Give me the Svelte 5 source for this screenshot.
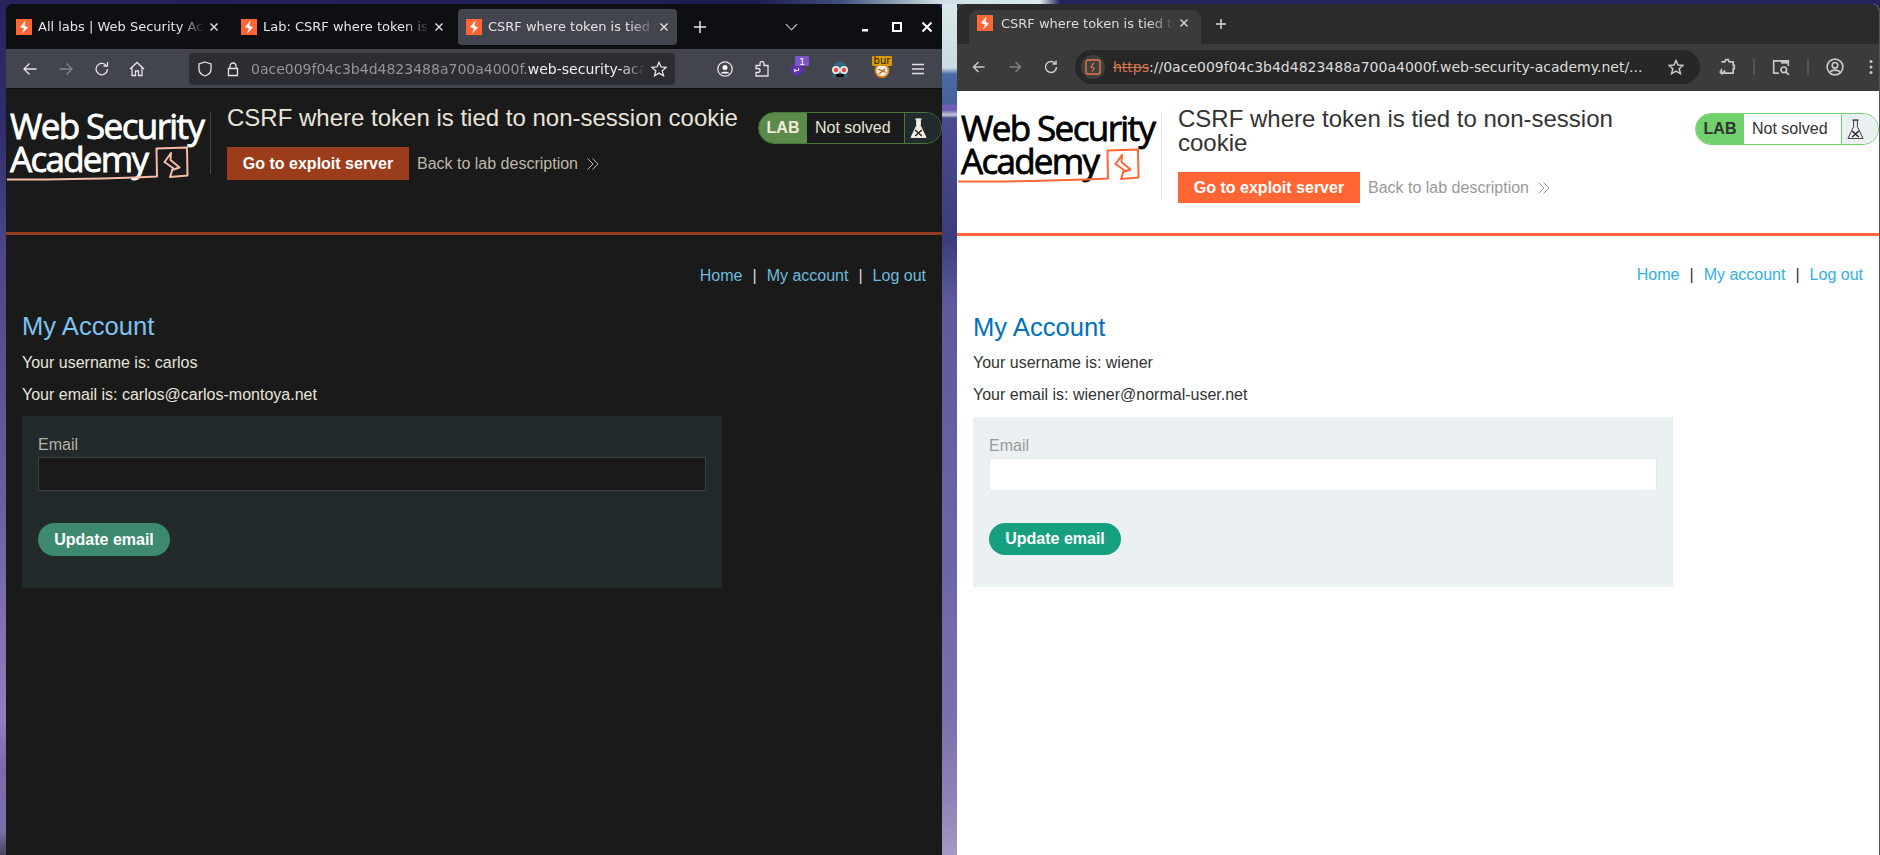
<script>
  const accounts = {
    dark: { user: 'carlos', email: 'carlos@carlos-montoya.net' },
    light: { user: 'wiener', email: 'wiener@normal-user.net' }
  };
</script>

{#snippet favicon()}
  <svg class="fav" viewBox="0 0 16 16"><rect width="16" height="16" fill="#ff6633"/><path d="M9.500 1.500 4 8l4 1.500L6 14.500 12 8.500 8.500 6.800Z" fill="#fff"/></svg>
{/snippet}

{#snippet close()}
  <svg class="x" viewBox="0 0 10 10"><path d="M1.500 1.500l7 7M8.500 1.500l-7 7" stroke="currentColor" stroke-width="1.400" fill="none"/></svg>
{/snippet}

{#snippet flask()}
  <svg class="flask" viewBox="0 0 18 22">
    <path class="flask-body" d="M5.500 1h7M7 1v7L1 20.500h16L11 8V1Z"/>
    <path class="flask-x" d="M5.500 12.500l7 6.500M12.500 12.500l-7 6.500"/>
  </svg>
{/snippet}

{#snippet page(kind)}
  <div class="page">
    <header class="lab-head">
      <svg class="logo" viewBox="0 0 204 72">
        <text class="logo-text" x="3" y="29" textLength="195" lengthAdjust="spacing">Web Security</text>
        <text class="logo-text" x="3" y="62" textLength="139" lengthAdjust="spacing">Academy</text>
        <path class="logo-mark" d="M0.500 69.500C40 70 95 68.500 128 67.500L150 66.500 149.500 38.500 180 37.500 180.500 65.500 163 67M164 43 157.500 52 166 58 163 67M164 43 163.500 50 172.500 57.500 165 60"/>
      </svg>
      <div class="divider"></div>
      <div class="title-col">
        <h2 class="title">CSRF where token is tied to non-session cookie</h2>
        <div class="actions">
          <span class="exploit">Go to exploit server</span>
          <span class="back">Back to lab description</span>
          <svg class="chev" viewBox="0 0 14 14"><path d="M1.500 1.500 7 7l-5.500 5.500M6.500 1.500 12 7l-5.500 5.500" fill="none" stroke="currentColor" stroke-width="1"/></svg>
        </div>
      </div>
      <div class="badge">
        <span class="badge-lab">LAB</span>
        <span class="badge-status">Not solved</span>
        <span class="badge-icon">{@render flask()}</span>
      </div>
    </header>
    <main class="content">
      <nav class="site-nav">
        <span class="link">Home</span><span class="sep">|</span><span class="link">My account</span><span class="sep">|</span><span class="link">Log out</span>
      </nav>
      <h1>My Account</h1>
      <p class="p-first">Your username is: {accounts[kind].user}</p>
      <p class="p-second">Your email is: {accounts[kind].email}</p>
      <form class="panel" onsubmit={(e) => e.preventDefault()}>
        <label class="field-label" for="email-{kind}">Email</label>
        <input id="email-{kind}" class="field" type="email" />
        <button class="update" type="submit">Update email</button>
      </form>
    </main>
  </div>
{/snippet}

<div class="desktop">
  <div class="wall wall-left"></div>
  <div class="wall wall-gap"></div>
  <div class="wall wall-top"></div>

  <section class="window dark">
    <div class="ff-tabs">
      <div class="ff-tab">{@render favicon()}<span class="tab-text">All labs | Web Security Academy</span>{@render close()}</div>
      <div class="ff-tab">{@render favicon()}<span class="tab-text">Lab: CSRF where token is tied</span>{@render close()}</div>
      <div class="ff-tab active">{@render favicon()}<span class="tab-text">CSRF where token is tied to non</span>{@render close()}</div>
      <svg class="plus" viewBox="0 0 14 14"><path d="M7 1v12M1 7h12" stroke="#e6e6e6" stroke-width="1.500"/></svg>
      <svg class="list-all" viewBox="0 0 14 8"><path d="M1 1l6 6 6-6" fill="none" stroke="#d0d0d0" stroke-width="1.200"/></svg>
      <div class="wm">
        <svg viewBox="0 0 12 12"><rect x="1" y="8" width="6" height="2.500" fill="#fff"/></svg>
        <svg viewBox="0 0 12 12"><path d="M2 2h8v8H2Z" fill="none" stroke="#fff" stroke-width="2"/></svg>
        <svg viewBox="0 0 12 12"><path d="M1.500 1.500l9 9M10.500 1.500l-9 9" stroke="#fff" stroke-width="2"/></svg>
      </div>
    </div>
    <div class="ff-bar">
      <svg class="ico" viewBox="0 0 16 16"><path d="M14.500 8H2M7.500 2.500 2 8l5.500 5.500" class="ln"/></svg>
      <svg class="ico dim" viewBox="0 0 16 16"><path d="M1.500 8H14M8.500 2.500 14 8l-5.500 5.500" class="ln"/></svg>
      <svg class="ico" viewBox="0 0 16 16"><path d="M13.500 8a5.700 5.700 0 1 1-1.700-4M13.500 1v4h-4" class="ln"/></svg>
      <svg class="ico" viewBox="0 0 16 16"><path d="M1 8l7-6.500L15 8M3 6.500V14.500h3.500V10h3v4.500H13V6.500" class="ln"/></svg>
      <div class="ff-url">
        <svg class="ico-s" viewBox="0 0 16 16"><path d="M8 1l6 2v5c0 3.500-3 6-6 7-3-1-6-3.500-6-7V3Z" class="ln"/></svg>
        <svg class="ico-s" viewBox="0 0 16 16"><path d="M3.500 7.500h9v7h-9ZM5 7.500V5a3 3 0 0 1 6 0v2.500" class="ln"/></svg>
        <span class="ff-url-text"><span class="url-dim">0ace009f04c3b4d4823488a700a4000f.</span>web-security-academy.net/my-account</span>
        <svg class="ico-s star" viewBox="0 0 16 16"><path d="M8 1.200 10 6l5.200.4-4 3.400 1.300 5L8 12.100 3.500 14.800l1.300-5-4-3.400L6 6Z" class="ln"/></svg>
      </div>
      <div class="ff-ext">
        <svg class="ico" viewBox="0 0 16 16"><circle cx="8" cy="8" r="7.200" class="ln" stroke-width="1.500"/><circle cx="8" cy="6.500" r="2.500" fill="#fff"/><path d="M3.500 12.500c1-2.500 8-2.500 9 0" fill="#fff"/></svg>
        <svg class="ico" viewBox="0 0 16 16"><path d="M6 4.500V2.500a2 2 0 0 1 4 0V4.500h4V15H2v-3.500h2a2 2 0 0 0 0-4H2V4.500Z" class="ln"/></svg>
        <svg class="ext" viewBox="0 0 22 24"><path d="M0 15 8 7l8 8-8 7Z" fill="#5b2fb0"/><path d="M5 15.500h4.500V13M5 15.500l1.500-1.500M5 15.500 6.500 17" fill="none" stroke="#e4dcf5" stroke-width="1.100"/><rect x="6" y="1" width="14" height="10" rx="1.500" fill="#7c55d0"/><text x="13" y="9.500" class="ext-num">1</text></svg>
        <svg class="ext" viewBox="0 0 22 24"><path d="M4 14a7 7.500 0 0 1 14 0v8H4Z" fill="#2e6a7a"/><rect x="7" y="19" width="8" height="3" fill="#111"/><circle cx="7" cy="15" r="4" fill="#e4e4e4"/><circle cx="15" cy="15" r="4" fill="#e4e4e4"/><circle cx="7" cy="15" r="2.200" fill="#e2503a"/><circle cx="15" cy="15" r="2.200" fill="#e2503a"/></svg>
        <svg class="ext" viewBox="0 0 22 24"><circle cx="11" cy="15.500" r="6.500" fill="#f4efe8" stroke="#e8841a" stroke-width="1.800"/><path d="M7 14l8 3.500M8 19l6-5" stroke="#b5651d" stroke-width="1.300"/><rect x="1" y="1" width="20" height="10" rx="1" fill="#d89a00"/><text x="11" y="9.200" class="ext-bur">bur</text></svg>
        <svg class="ico" viewBox="0 0 16 16"><path d="M2 3.500h12M2 8h12M2 12.500h12" class="ln"/></svg>
      </div>
    </div>
    {@render page('dark')}
  </section>

  <section class="window light">
    <div class="cr-tabs">
      <div class="cr-tab">{@render favicon()}<span class="tab-text">CSRF where token is tied to non</span>{@render close()}</div>
      <svg class="plus cr-plus" viewBox="0 0 14 14"><path d="M7 2v10M2 7h10" stroke="#d8d8d8" stroke-width="1.500"/></svg>
    </div>
    <div class="cr-bar">
      <svg class="ico" viewBox="0 0 16 16"><path d="M13.500 8H2.500M7.500 3 2.500 8l5 5" class="ln"/></svg>
      <svg class="ico dim" viewBox="0 0 16 16"><path d="M2.500 8h11M8.500 3l5 5-5 5" class="ln"/></svg>
      <svg class="ico" viewBox="0 0 16 16"><path d="M13.500 8a5.500 5.500 0 1 1-1.600-3.900M13 1.500V5H9.500" class="ln"/></svg>
      <div class="omni">
        <span class="chip"><svg class="chip-ico" viewBox="0 0 16 16"><rect x="1" y="1" width="14" height="14" rx="2" fill="none" stroke="#ee7744" stroke-width="1.400"/><path d="M9 3.500 6 8l3 1-2 3.500" fill="none" stroke="#ee7744" stroke-width="1.200"/></svg></span>
        <span class="omni-text"><s>https</s>://0ace009f04c3b4d4823488a700a4000f.web-security-academy.net/...</span>
        <svg class="ico-s" viewBox="0 0 16 16"><path d="M8 1.500 10 6l5 .4-3.800 3.300 1.200 4.900L8 12l-4.400 2.600 1.200-4.900L1 6.400 6 6Z" class="ln" stroke-width="1.600"/></svg>
      </div>
      <div class="cr-ext">
        <svg class="ico" viewBox="0 0 16 16"><path d="M3 3.500h3l1-2h2l1 2h3.500v3h1v3h-1v4H3v-4M1.500 12l2 2 3-3" class="ln"/></svg>
        <span class="cr-sep"></span>
        <svg class="ico" viewBox="0 0 16 16"><path d="M6 13.500H1.500v-11h13V7" class="ln"/><rect x="8" y="2" width="7" height="3" fill="#c8c8c8"/><circle cx="10.500" cy="10.500" r="2.500" class="ln"/><path d="M12.500 12.500 15 15" class="ln"/></svg>
        <span class="cr-sep"></span>
        <svg class="ico" viewBox="0 0 16 16"><circle cx="8" cy="8" r="7" class="ln"/><circle cx="8" cy="6.500" r="2.500" class="ln"/><path d="M3.500 13c1-3 8-3 9 0" class="ln"/></svg>
        <svg class="dots" viewBox="0 0 4 16"><circle cx="2" cy="2.500" r="1.500" fill="#c8c8c8"/><circle cx="2" cy="8" r="1.500" fill="#c8c8c8"/><circle cx="2" cy="13.500" r="1.500" fill="#c8c8c8"/></svg>
      </div>
    </div>
    {@render page('light')}
  </section>
</div>

<style>
  :global(body) { margin: 0; overflow: hidden; }
  .desktop {
    position: relative; width: 1880px; height: 855px; overflow: hidden;
    background: #27235a;
    font-family: "Liberation Sans", Arial, sans-serif;
  }
  .wall { position: absolute; }
  .wall-left {
    left: 0; top: 0; width: 6px; height: 855px;
    background: linear-gradient(180deg, #27235c 0, #312c6c 120px, #4a4585 240px, #6a5f9e 500px, #937fb9 720px, #7a6aa5 770px, #7d6fa8 830px, #4a4560 855px);
  }
  .wall-gap {
    left: 942px; top: 0; width: 15px; height: 855px;
    background: linear-gradient(180deg, #dbe9ea 0, #c8dde2 68px, #4a6aa5 74px, #46609e 104px, #7a5cc4 106px, #6a5cb0 110px, #c4c8dc 115px, #4a4c90 118px, #3a3d78 240px, #5c5a9c 300px, #6b65a5 550px, #7c70ae 720px, #8f82b8 800px, #a498c4 855px);
  }
  .wall-top {
    left: 0; top: 0; width: 1880px; height: 4px;
    background: linear-gradient(90deg, #27235c 0, #1e1e50 760px, #3f4f7c 840px, #cfe0e4 940px, #dbe9ea 1040px, #27235c 1060px, #27235c 1880px);
  }

  .window {
    position: absolute; top: 4px; height: 851px; display: flex; flex-direction: column;
    border-radius: 7px 7px 0 0; overflow: hidden;
  }
  .dark {
    left: 6px; width: 936px; background: #1a1a1a;
    --page: #1a1a1a; --txt: #e8e4da; --link: #6fbbdd; --h1: #7cc4ee; --label: #b7b2a6;
    --accent: #9b3c1b; --line: #8f3d1e; --divider: #454545; --back: #bfb8a9; --logo: #fff; --mark: #f7bca6;
    --panel: #222a2c; --input: #1a1a1a; --input-b: #3c4142; --update: #3d8a70;
    --lab-bg: #5b8a4a; --lab-txt: #efeadd; --lab-b: #47793a; --st-bg: #1a1a1a; --ic-bg: #212a2c; --flask: #f2efe6; --flask-x: #222;
    --sep: #ddd9cf; --t: 23px; --title-t: 17px; --title-fs: 24px; --title-ws: nowrap; --btn-h: 33px; --head-h: 143px; --nav-t: 31px; --h1-t: 25px; --p1-t: 12px;
    --panel-t: 11px; --input-h: 34px; --upd-h: 33px;
  }
  .light {
    left: 957px; width: 922px; background: #fff; border-right: 1px solid #555;
    --page: #fff; --txt: #333332; --link: #2fb0ea; --h1: #0071bc; --label: #999;
    --accent: #ff6633; --line: #ff6633; --divider: #e6e8ea; --back: #999; --logo: #000; --mark: #ff6633;
    --panel: #ebf0f2; --input: #fff; --input-b: #e4e8ea; --update: #17a07f;
    --lab-bg: #70d16d; --lab-txt: #333; --lab-b: #70d16d; --st-bg: #fff; --ic-bg: #ebf0f2; --flask: none; --flask-x: #222;
    --sep: #333; --t: 22px; --title-t: 16px; --title-fs: 24px; --title-ws: normal; --btn-h: 31px; --head-h: 142px; --nav-t: 29px; --h1-t: 27px; --p1-t: 11px;
    --panel-t: 12px; --input-h: 33px; --upd-h: 32px;
  }

  /* Firefox chrome */
  .ff-tabs { height: 45px; background: #0e0f13; display: flex; align-items: center; padding: 0 0 0 2px; box-sizing: border-box; flex: none; }
  .ff-tab { width: 225px; height: 36px; display: flex; align-items: center; padding: 0 14px 0 8px; box-sizing: border-box; border-radius: 4px; color: #e3e3e4; }
  .ff-tab.active { background: #42454d; width: 219px; padding-right: 8px; }
  .fav { width: 16px; height: 16px; flex: none; }
  .tab-text {
    font: 13px "DejaVu Sans", sans-serif; margin-left: 6px; flex: 1; white-space: nowrap; overflow: hidden;
    -webkit-mask-image: linear-gradient(90deg, #000 85%, transparent); mask-image: linear-gradient(90deg, #000 85%, transparent);
  }
  .x { width: 10px; height: 10px; flex: none; margin-left: 4px; }
  .plus { width: 14px; height: 14px; flex: none; margin-left: 16px; }
  .list-all { width: 13px; height: 8px; flex: none; margin-left: 78px; }
  .wm { display: flex; gap: 18px; margin-left: 63px; }
  .wm svg { width: 12px; height: 12px; }
  .ff-bar { height: 40px; flex: none; background: #42454d; display: flex; align-items: center; padding-left: 16px; box-sizing: border-box; border-bottom: 1px solid #0e0f13; }
  .ico { width: 16px; height: 16px; flex: none; }
  .ico.dim { opacity: 0.4; }
  .ff-bar > .ico { margin-right: 20px; }
  .ff-bar > .ico:nth-child(3) { margin-right: 19px; }
  .ico-s { width: 16px; height: 16px; flex: none; }
  .ln { fill: none; stroke: #e4e4e4; stroke-width: 1.300; }
  .ff-url { width: 486px; height: 32px; margin-left: 24px; background: #2b2d33; border-radius: 4px; display: flex; align-items: center; padding: 0 8px; box-sizing: border-box; flex: none; }
  .ff-url .ico-s + .ico-s { margin-left: 12px; }
  .ff-url-text {
    font: 14px "DejaVu Sans", sans-serif; color: #f0f0f0; margin-left: 10px; width: 394px; white-space: nowrap; overflow: hidden; flex: none;
    -webkit-mask-image: linear-gradient(90deg, #000 94%, transparent); mask-image: linear-gradient(90deg, #000 94%, transparent);
  }
  .url-dim { color: #94959a; }
  .ff-url .star { margin-left: 6px; }
  .ff-ext { display: flex; align-items: center; margin-left: 42px; }
  .ext { width: 22px; height: 24px; flex: none; margin-top: -4px; }
  .ff-ext > :nth-child(1) { margin-right: 21px; }
  .ff-ext > :nth-child(2) { margin-right: 19px; }
  .ff-ext > :nth-child(3) { margin-right: 18px; }
  .ff-ext > :nth-child(4) { margin-right: 20px; }
  .ff-ext > :nth-child(5) { margin-right: 17px; }
  .ext-num { font: 9px "DejaVu Sans", sans-serif; fill: #fff; text-anchor: middle; }
  .ext-bur { font: 10px "DejaVu Sans", sans-serif; fill: #222; text-anchor: middle; }

  /* Chrome chrome */
  .cr-tabs { height: 40px; flex: none; background: #2b2b2b; display: flex; align-items: flex-end; padding-left: 12px; }
  .cr-tab { width: 232px; height: 34px; background: #3b3b3b; border-radius: 9px 9px 0 0; display: flex; align-items: center; padding: 0 12px 8px 8px; box-sizing: border-box; color: #dcdcdc; }
  .cr-tab .tab-text { margin-left: 8px; }
  .cr-plus { align-self: center; margin: 0 0 0 13px; }
  .cr-bar { height: 47px; flex: none; background: #3b3b3b; display: flex; align-items: center; padding: 0 0 1px 14px; box-sizing: border-box; }
  .cr-bar > .ico { margin-right: 20px; }
  .cr-bar .ln { stroke: #c8c8c8; stroke-width: 1.500; }
  .cr-bar > .ico.dim { opacity: 0.5; }
  .omni { width: 625px; height: 34px; margin-left: -4px; background: #272727; border-radius: 17px; display: flex; align-items: center; padding: 0 16px 0 6px; box-sizing: border-box; flex: none; }
  .chip { width: 24px; height: 24px; border-radius: 50%; background: #3f3f3f; display: flex; align-items: center; justify-content: center; flex: none; }
  .chip-ico { width: 16px; height: 16px; }
  .omni-text { font: 14px "DejaVu Sans", sans-serif; color: #dcdcdc; margin-left: 8px; flex: 1; white-space: nowrap; overflow: hidden; }
  .omni-text s { color: #d9764f; }
  .cr-ext { display: flex; align-items: center; margin-left: 18px; }
  .cr-ext .ico { width: 18px; height: 18px; }
  .cr-sep { width: 2px; height: 16px; background: #555; margin: 0 17px; }
  .dots { width: 4px; height: 16px; margin-left: 25px; }

  /* Page */
  .page { flex: 1; background: var(--page); color: var(--txt); font-size: 16px; }
  .lab-head { height: var(--head-h); display: flex; align-items: flex-start; border-bottom: 3px solid var(--line); }
  .logo { width: 204px; height: 72px; flex: none; margin: 21px 0 0 1px; }
  .logo-text { font: 400 35px "Open Sans", sans-serif; fill: var(--logo); stroke: var(--logo); stroke-width: 0.800; }
  .logo-mark { fill: none; stroke: var(--mark); stroke-width: 2; stroke-linejoin: round; stroke-linecap: round; }
  .divider { width: 1px; flex: none; margin-top: var(--t); height: 62px; background: var(--divider); margin-left: -1px; }
  .light .divider { height: 86px; }
  .title-col { flex: 1; min-width: 0; padding: var(--title-t) 12px 0 16px; }
  .title { margin: 0; font-weight: 400; font-size: var(--title-fs); line-height: 24px; color: var(--txt); white-space: var(--title-ws); }
  .actions { display: flex; align-items: center; margin-top: 17px; }
  .exploit { width: 182px; height: var(--btn-h); background: var(--accent); color: #fff; font-weight: 700; display: flex; align-items: center; justify-content: center; flex: none; }
  .back { color: var(--back); margin-left: 8px; }
  .chev { width: 14px; height: 14px; color: var(--back); margin-left: 8px; }
  .badge { width: 184px; height: 32px; flex: none; margin-top: var(--t); display: flex; box-sizing: border-box; border: 1px solid var(--lab-b); border-radius: 16px; overflow: hidden; }
  .badge-lab { width: 48px; background: var(--lab-bg); color: var(--lab-txt); font-weight: 700; display: flex; align-items: center; justify-content: center; flex: none; box-sizing: border-box; }
  .badge-status { width: 98px; background: var(--st-bg); padding-left: 8px; box-sizing: border-box; border-right: 1px solid var(--lab-b); line-height: 29px; flex: none; }
  .badge-icon { flex: 1; background: var(--ic-bg); display: flex; align-items: center; justify-content: center; padding-right: 9px; }
  .flask { width: 17px; height: 21px; }
  .flask-body { fill: var(--flask); stroke: #333; stroke-width: 1; }
  .dark .flask-body { stroke: #f2efe6; }
  .flask-x { stroke: var(--flask-x); stroke-width: 1.500; fill: none; }
  .content { padding: var(--nav-t) 16px 0; }
  .site-nav { display: flex; justify-content: flex-end; line-height: 20px; }
  .link { color: var(--link); }
  .sep { color: var(--sep); margin: 0 10px; }
  h1 { margin: var(--h1-t) 0 0; font-size: 25.600px; font-weight: 400; line-height: 30px; color: var(--h1); }
  p { margin: 0; line-height: 20px; }
  .p-first { margin-top: var(--p1-t); }
  .p-second { margin-top: 12px; }
  .panel { width: 700px; margin-top: var(--panel-t); background: var(--panel); padding: 19px 16px 32px; box-sizing: border-box; display: flex; flex-direction: column; align-items: flex-start; }
  .field-label { line-height: 20px; color: var(--label); margin-bottom: 2px; }
  .field { width: 668px; height: var(--input-h); box-sizing: border-box; background: var(--input); border: 1px solid var(--input-b); padding: 0; outline: none; }
  .update { width: 132px; height: var(--upd-h); margin-top: 32px; border: 0; border-radius: 17px; background: var(--update); color: #fff; font: 700 16px "Liberation Sans", Arial, sans-serif; padding: 0; }
</style>
